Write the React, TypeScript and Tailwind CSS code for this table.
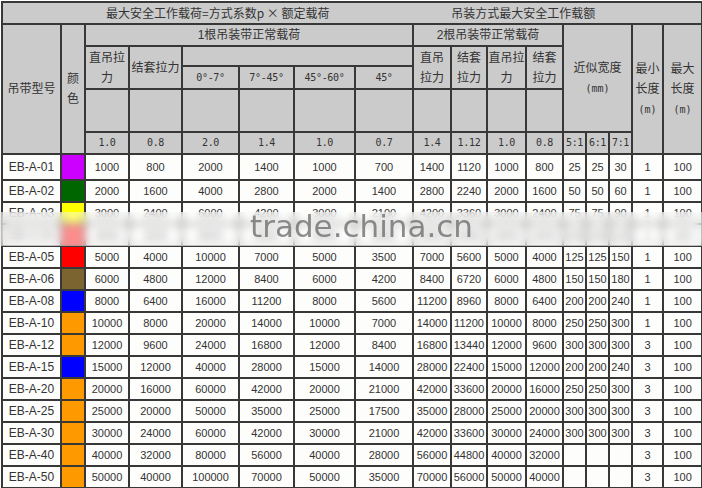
const rows: [string, string, string[]][] = [
  ["EB-A-01", "bg-[#cc00ff]", ["1000", "800", "2000", "1400", "1000", "700", "1400", "1120", "1000", "800", "25", "25", "30", "1", "100"]],
  ["EB-A-02", "bg-[#006600]", ["2000", "1600", "4000", "2800", "2000", "1400", "2800", "2240", "2000", "1600", "50", "50", "60", "1", "100"]],
  ["EB-A-03", "bg-[#ffff00]", ["3000", "2400", "6000", "4200", "3000", "2100", "4200", "3360", "3000", "2400", "75", "75", "90", "1", "100"]],
  ["EB-A-04", "bg-[#ff3030]", ["4000", "3200", "8000", "5600", "4000", "2800", "5600", "4480", "4000", "3200", "100", "100", "120", "1", "100"]],
  ["EB-A-05", "bg-[#ff0000]", ["5000", "4000", "10000", "7000", "5000", "3500", "7000", "5600", "5000", "4000", "125", "125", "150", "1", "100"]],
  ["EB-A-06", "bg-[#7b6430]", ["6000", "4800", "12000", "8400", "6000", "4200", "8400", "6720", "6000", "4800", "150", "150", "180", "1", "100"]],
  ["EB-A-08", "bg-[#0000ff]", ["8000", "6400", "16000", "11200", "8000", "5600", "11200", "8960", "8000", "6400", "200", "200", "240", "1", "100"]],
  ["EB-A-10", "bg-[#ff9900]", ["10000", "8000", "20000", "14000", "10000", "7000", "14000", "11200", "10000", "8000", "250", "250", "300", "1", "100"]],
  ["EB-A-12", "bg-[#ff9900]", ["12000", "9600", "24000", "16800", "12000", "8400", "16800", "13440", "12000", "9600", "300", "300", "300", "3", "100"]],
  ["EB-A-15", "bg-[#0000ff]", ["15000", "12000", "40000", "28000", "15000", "14000", "28000", "22400", "15000", "12000", "200", "200", "240", "3", "100"]],
  ["EB-A-20", "bg-[#ff9900]", ["20000", "16000", "60000", "42000", "20000", "21000", "42000", "33600", "20000", "16000", "250", "250", "300", "3", "100"]],
  ["EB-A-25", "bg-[#ff9900]", ["25000", "20000", "50000", "35000", "25000", "17500", "35000", "28000", "25000", "20000", "300", "300", "300", "3", "100"]],
  ["EB-A-30", "bg-[#ff9900]", ["30000", "24000", "60000", "42000", "30000", "21000", "42000", "33600", "30000", "24000", "300", "300", "300", "3", "100"]],
  ["EB-A-40", "bg-[#ff9900]", ["40000", "32000", "80000", "56000", "40000", "28000", "56000", "44800", "40000", "32000", "", "", "", "3", "100"]],
  ["EB-A-50", "bg-[#ff9900]", ["50000", "40000", "100000", "70000", "50000", "35000", "70000", "56000", "50000", "40000", "", "", "", "3", "100"]],
];

const factors = ["1.0", "0.8", "2.0", "1.4", "1.0", "0.7", "1.4", "1.12", "1.0", "0.8", "5:1", "6:1", "7:1"];

// header cell, no font size so variants can set their own
const cell = "border-2 border-[#383838] bg-[#cbcbcb] p-0 text-center align-middle font-normal leading-[20px] text-[#333]";
const hd = `${cell} text-[12px]`;
const hdMono = `${cell} font-['DejaVu_Sans_Mono',monospace] text-[10px] whitespace-nowrap tracking-[-0.3px]`;
const mono = "font-['DejaVu_Sans_Mono',monospace] text-[10px]";
const td = "border-2 border-[#383838] bg-[#fdfdfb] p-0 text-center align-middle text-[#333] whitespace-nowrap";

export default function App() {
  return (
    <div className="relative bg-white pl-px pt-px w-[702px] h-[488px] overflow-hidden font-['Liberation_Sans','Noto_Sans_CJK_SC',sans-serif]">
      <table className="table-fixed border-collapse w-[700px]">
        <colgroup>
          <col className="w-[59px]" />
          <col className="w-[24px]" />
          <col className="w-[44px]" />
          <col className="w-[53px]" />
          <col className="w-[57px]" />
          <col className="w-[55px]" />
          <col className="w-[61px]" />
          <col className="w-[58px]" />
          <col className="w-[38px]" />
          <col className="w-[36px]" />
          <col className="w-[39px]" />
          <col className="w-[37px]" />
          <col className="w-[23px]" />
          <col className="w-[23px]" />
          <col className="w-[23px]" />
          <col className="w-[31px]" />
          <col className="w-[39px]" />
        </colgroup>
        <thead>
          <tr className="h-[21px]">
            <th colSpan={17} className={hd}>
              <div className="flex font-['Noto_Sans_CJK_SC',sans-serif]">
                <span className="ml-[103px]">最大安全工作载荷=方式系数p × 额定载荷</span>
                <span className="ml-auto mr-[106px]">吊装方式最大安全工作载额</span>
              </div>
            </th>
          </tr>
          <tr className="h-[21px]">
            <th rowSpan={5} className={hd}>吊带型号</th>
            <th rowSpan={5} className={hd}>颜<br />色</th>
            <th colSpan={6} className={hd}>1根吊装带正常载荷</th>
            <th colSpan={4} className={hd}>2根吊装带正常载荷</th>
            <th rowSpan={4} colSpan={3} className={hd}>
              近似宽度<br />
              <span className={mono}>(mm)</span>
            </th>
            <th rowSpan={5} className={hd}>
              最小<br />长度<br />
              <span className={mono}>(m)</span>
            </th>
            <th rowSpan={5} className={hd}>
              最大<br />长度<br />
              <span className={mono}>(m)</span>
            </th>
          </tr>
          <tr className="h-[20px]">
            <th rowSpan={2} className={hd}>直吊拉<br />力</th>
            <th rowSpan={2} className={`${hd} whitespace-nowrap`}>结套拉力</th>
            <th colSpan={4} className={hd}></th>
            <th rowSpan={2} className={hd}>直吊<br />拉力</th>
            <th rowSpan={2} className={hd}>结套<br />拉力</th>
            <th rowSpan={2} className={`${hd} whitespace-nowrap`}>直吊拉<br />力</th>
            <th rowSpan={2} className={hd}>结套<br />拉力</th>
          </tr>
          <tr className="h-[23px]">
            <th className={hdMono}>0°-7°</th>
            <th className={hdMono}>7°-45°</th>
            <th className={hdMono}>45°-60°</th>
            <th className={hdMono}>45°</th>
          </tr>
          <tr className="h-[43px]">
            {Array.from({ length: 10 }).map((_, i) => (
              <th key={i} className={hd}></th>
            ))}
          </tr>
          <tr className="h-[21px]">
            {factors.map((f, i) => (
              <th key={i} className={hdMono}>{f}</th>
            ))}
          </tr>
        </thead>
        <tbody>
          {rows.map(([name, color, vals], r) => (
            <tr key={name} className={r === 0 ? "h-[26px]" : "h-[22px]"}>
              <td className={`${td} text-[12px]`}>{name}</td>
              <td className={`border-2 border-[#383838] p-0 ${color}`}></td>
              {vals.map((v, i) => (
                <td key={i} className={`${td} text-[11px]`}>{v}</td>
              ))}
            </tr>
          ))}
        </tbody>
      </table>

      {/* watermark band over rows 03-05 */}
      <div className="absolute left-0 right-0 top-[212px] h-[34px] backdrop-blur-[4px] bg-white/45" />
      <div className="absolute left-[250px] top-[206px] text-[31px] leading-[40px] text-[#6f6f6f]/80 blur-[0.5px] font-['DejaVu_Sans',sans-serif]">
        trade.china.cn
      </div>
    </div>
  );
}
